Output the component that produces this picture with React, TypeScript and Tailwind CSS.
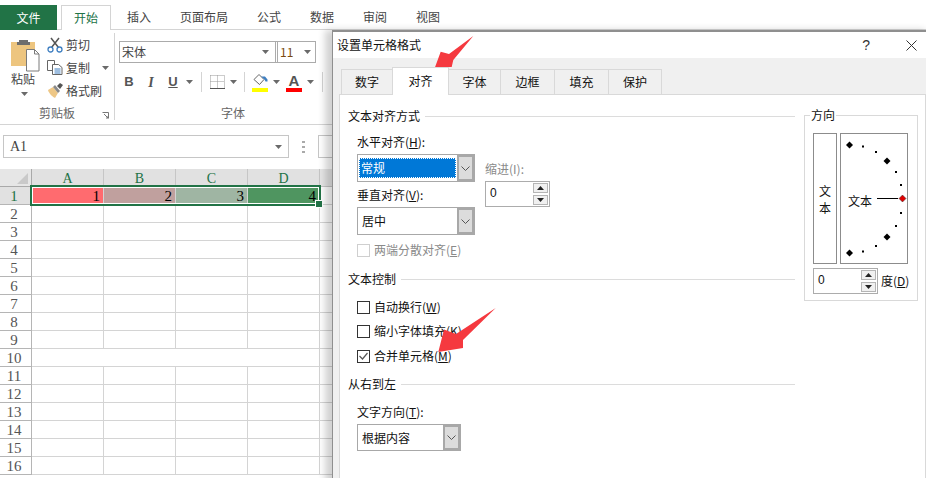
import type { ReactNode } from 'react'

const cjk = "font-['Noto_Sans_CJK_SC','Liberation_Sans',sans-serif]"
const sheetFont = "font-['Liberation_Serif','Noto_Sans_CJK_SC',serif]"

const rows = Array.from({ length: 16 }, (_, i) => i + 1)
const columns = ['A', 'B', 'C', 'D']
const fills = ['bg-[#ff6b6f]', 'bg-[#c0a09e]', 'bg-[#9fb5a3]', 'bg-[#4f9560]']

function Caret({ className = '' }: { className?: string }) {
  return (
    <svg width="7" height="4" viewBox="0 0 7 4" className={className} aria-hidden="true">
      <path d="M0 0h7L3.5 4z" fill="#6a6a6a" />
    </svg>
  )
}

function Divider({ className = '' }: { className?: string }) {
  return <div className={`h-[20px] w-px bg-[#d4d4d4] ${className}`} />
}

/* 功能区左侧：粘贴板 */
function PasteIcon() {
  return (
    <svg width="29" height="33" viewBox="0 0 29 33" aria-hidden="true">
      <path d="M0 3h24v24H0z" fill="#edc57f" />
      <path d="M8 3V1h9v2h2v3H6V3z" fill="#6d6d6d" />
      <path d="M15.500 10.500h8l4.500 4.500v17h-12.500z" fill="#fff" stroke="#7a7a7a" />
      <path d="M23.500 10.500v4.500h4.500" fill="none" stroke="#7a7a7a" />
    </svg>
  )
}

function ScissorsIcon() {
  return (
    <svg width="16" height="16" viewBox="0 0 16 16" aria-hidden="true">
      <path d="M4 1l7.500 9.500M12 1l-7.500 9.500" stroke="#555" strokeWidth="1.500" fill="none" />
      <circle cx="3.500" cy="12.500" r="2.500" fill="none" stroke="#3f7fc1" strokeWidth="1.300" />
      <circle cx="12.500" cy="12.500" r="2.500" fill="none" stroke="#3f7fc1" strokeWidth="1.300" />
    </svg>
  )
}

function CopyIcon() {
  return (
    <svg width="16" height="15" viewBox="0 0 16 15" aria-hidden="true">
      <path d="M.500.500h7v10h-7z" fill="#fff" stroke="#666" />
      <path d="M5.500 4.500h6l3.500 3v7h-9.500z" fill="#fff" stroke="#666" />
      <path d="M7.500 9h6M7.500 11h6M7.500 13h6" stroke="#3f7fc1" />
    </svg>
  )
}

function BrushIcon() {
  return (
    <svg width="17" height="15" viewBox="0 0 17 15" aria-hidden="true">
      <path d="M1 7l5-3 5 6-3 5C6 14 2 11 1 7z" fill="#eec786" />
      <path d="M6 4l5 6 2-2-5-6z" fill="#8a8a8a" />
      <path d="M10 3l3-3 3 2-3 4z" fill="#555" />
    </svg>
  )
}

function BorderIcon() {
  return (
    <svg width="15" height="14" viewBox="0 0 15 14" aria-hidden="true">
      <path d="M.500.500h14M.500 6.500h14M.500.500v13M7.500.500v13M14.500.500v13" stroke="#999" strokeDasharray="1 1" fill="none" />
      <path d="M0 13.500h15" stroke="#555" />
    </svg>
  )
}

function FillIcon() {
  return (
    <svg width="16" height="19" viewBox="0 0 16 19" aria-hidden="true">
      <path d="M2 6.500L7 1.500l5 5-4.500 5z" fill="#fff" stroke="#666" />
      <path d="M9 3.500h4l2.500 3v2h-2l-1-2z" fill="#3f7fc1" />
      <path d="M0 15h16v4H0z" fill="#ffff00" />
    </svg>
  )
}

function ClipboardGroup() {
  return (
    <div className="mt-[3px] flex h-[87px] w-[115px] shrink-0 flex-col justify-between border-r border-[#d4d4d4]">
      <div className="flex">
        <div className="ml-[11px] flex w-[29px] flex-col items-start pt-[6px]">
          <PasteIcon />
          <span className="-mt-[1px] w-6 text-center leading-[16px]">粘贴</span>
          <Caret className="ml-[10px] mt-[5px]" />
        </div>
        <div className="ml-[7px] flex flex-col">
          <div className="flex h-[23px] items-center gap-[3px]">
            <ScissorsIcon />
            <span>剪切</span>
          </div>
          <div className="flex h-[23px] items-center gap-[3px]">
            <CopyIcon />
            <span>复制</span>
            <Caret className="ml-[9px]" />
          </div>
          <div className="flex h-[23px] items-center gap-[2px]">
            <BrushIcon />
            <span>格式刷</span>
          </div>
        </div>
      </div>
      <div className="relative h-[15px] text-center leading-[15px] text-[#666]">
        剪贴板
        <svg width="8" height="8" viewBox="0 0 8 8" className="absolute bottom-0 right-[4px]" aria-hidden="true">
          <path d="M.500.500h6v6M2 2l4 4M4 6h2V4" fill="none" stroke="#777" />
        </svg>
      </div>
    </div>
  )
}

function FontGroup() {
  return (
    <div className="mt-[3px] flex h-[87px] w-[218px] shrink-0 flex-col justify-between pl-[4px]">
      <div className="pt-[8px]">
        <div className="flex h-[22px] w-[197px] border border-[#ababab] leading-[20px]">
          <div className="flex w-[156px] items-center justify-between border-r border-[#ababab] pl-[2px] pr-[6px]">
            <span>宋体</span>
            <Caret />
          </div>
          <div className="ml-px flex flex-1 items-center justify-between border-l border-[#ababab] pl-[2px] pr-[4px]">
            <span className="text-[#7a4a10]">11</span>
            <Caret />
          </div>
        </div>
        <div className="mt-[9px] flex h-[20px] items-center text-[#555]">
          <span className="w-5 text-center font-['Liberation_Sans',sans-serif] text-[13px] font-bold">B</span>
          <span className="ml-[2px] w-5 text-center font-['Liberation_Serif',serif] text-[14px] font-bold italic">I</span>
          <span className="ml-[2px] w-5 text-center font-['Liberation_Sans',sans-serif] text-[13px] font-bold underline">U</span>
          <Caret className="ml-[3px]" />
          <Divider className="ml-[8px]" />
          <div className="ml-[8px]"><BorderIcon /></div>
          <Caret className="ml-[5px]" />
          <Divider className="ml-[7px]" />
          <div className="ml-[7px]"><FillIcon /></div>
          <Caret className="ml-[5px]" />
          <div className="ml-[6px] flex w-4 flex-col items-center">
            <span className="h-[15px] font-['Liberation_Sans',sans-serif] text-[15px] font-bold leading-[15px]">A</span>
            <span className="h-[4px] w-4 bg-[#ff0000]" />
          </div>
          <Caret className="ml-[5px]" />
          <Divider className="ml-[8px]" />
        </div>
      </div>
      <div className="h-[15px] pl-[14px] text-center leading-[15px] text-[#666]">字体</div>
    </div>
  )
}

function Ribbon() {
  return (
    <>
      <div className="flex h-[30px] items-end border-b border-[#d4d4d4]">
        <div className="mt-[5px] flex h-[25px] w-[57px] items-center justify-center self-start bg-[#217346] text-white">文件</div>
        <div className="relative top-px ml-[4px] flex h-[25px] w-[50px] items-center justify-center border-x border-t border-[#d4d4d4] bg-white text-[#217346]">开始</div>
        <div className="ml-[16px] flex h-[25px] items-center gap-[29px] text-[#444]">
          {['插入', '页面布局', '公式', '数据', '审阅', '视图'].map((tab) => (
            <span key={tab}>{tab}</span>
          ))}
        </div>
      </div>
      <div className="flex h-[95px] border-b border-[#d4d4d4] text-[#444]">
        <ClipboardGroup />
        <FontGroup />
      </div>
    </>
  )
}

function FormulaBar() {
  return (
    <div className="ml-[3px] mt-[10px] flex h-[23px] items-center">
      <div className={`flex h-full w-[286px] items-center justify-between border border-[#c6c6c6] pl-[6px] pr-[6px] ${sheetFont} text-[14px] text-[#444]`}>
        A1
        <Caret />
      </div>
      <div className="ml-[13px] flex h-[12px] w-[3px] flex-col justify-between">
        <span className="h-[2px] bg-[#aaa]" />
        <span className="h-[2px] bg-[#aaa]" />
        <span className="h-[2px] bg-[#aaa]" />
      </div>
      <div className="ml-[13px] h-full w-[60px] border border-[#c6c6c6]" />
    </div>
  )
}

function Sheet() {
  return (
    <div className={`relative mt-[11px] ${sheetFont} text-[15px] leading-[19px]`}>
      <div className="flex h-[18px]">
        <div className="relative w-[32px] shrink-0 border-b border-r border-[#a9a9a9] bg-[#e6e6e6]">
          <svg width="11" height="11" viewBox="0 0 11 11" className="absolute bottom-[2px] right-[3px]" aria-hidden="true">
            <path d="M11 0v11H0z" fill="#c9c9c9" />
          </svg>
        </div>
        {columns.map((col) => (
          <div key={col} className="w-[72px] shrink-0 border-b border-r border-[#c6c6c6] bg-[#e1e1e1] text-center text-[14px] text-[#217346]">
            {col}
          </div>
        ))}
        <div className="w-[72px] shrink-0 border-b border-[#c6c6c6] bg-[#e6e6e6]" />
      </div>
      {rows.map((row) => (
        <div key={row} className="flex h-[18px]">
          <div className={`w-[32px] shrink-0 border-b border-r border-[#b5b5b5] pr-[3px] text-center ${row === 1 ? 'bg-[#e1e1e1] text-[#217346]' : 'bg-white text-[#555]'}`}>
            {row}
          </div>
          {row === 10 ? (
            <div className="w-[288px] shrink-0 border-b border-r border-[#d4d4d4]" />
          ) : (
            columns.map((col, i) => (
              <div
                key={col}
                className={`w-[72px] shrink-0 border-b border-r border-[#d4d4d4] pr-[3px] text-right text-black ${row === 1 ? fills[i] : ''}`}
              >
                {row === 1 ? i + 1 : ''}
              </div>
            ))
          )}
          <div className="w-[72px] shrink-0 border-b border-[#d4d4d4]" />
        </div>
      ))}
      {/* 选区框 */}
      <div className="absolute left-[30px] top-[16px] h-[21px] w-[291px] border-2 border-[#217346]">
        <div className="h-full w-full border border-white" />
        <div className="absolute -bottom-[3px] -right-[3px] h-[6px] w-[6px] bg-[#217346] outline outline-1 outline-white" />
      </div>
    </div>
  )
}

function Section({ title, children }: { title: string; children?: ReactNode }) {
  return (
    <>
      <div className="flex h-[18px] items-center gap-[5px]">
        <span className="shrink-0">{title}</span>
        <div className="h-px flex-1 bg-[#dcdcdc]" />
      </div>
      {children}
    </>
  )
}

function Chevron() {
  return (
    <svg width="9" height="5" viewBox="0 0 9 5" aria-hidden="true">
      <path d="M.500.500l4 4 4-4" fill="none" stroke="#555" />
    </svg>
  )
}

function Select({ text, width, height, selected }: { text: string; width: string; height: string; selected?: boolean }) {
  return (
    <div className={`mt-[3px] flex ${width} ${height} border border-[#a8a8a8] bg-white`}>
      <div className="flex min-w-0 flex-1 items-center p-px">
        <div className={`flex h-[20px] w-full items-center ${selected ? 'border border-dotted border-white bg-[#0078d7] pl-px text-white' : 'pl-[3px]'}`}>
          {text}
        </div>
      </div>
      <div className="flex w-[17px] shrink-0 items-center justify-center border-2 border-[#a8a8a8] bg-[#dcdcdc]">
        <Chevron />
      </div>
    </div>
  )
}

function Spin({ className = '' }: { className?: string }) {
  return (
    <div className={`flex h-[26px] w-[65px] items-center justify-between border border-[#acacac] bg-white pl-[4px] pr-px ${className}`}>
      <span className="-mt-[2px] font-['Liberation_Sans',sans-serif] text-[12px]">0</span>
      <div className="flex flex-col gap-[2px]">
        {['M0 4h7L3.500 0z', 'M0 0h7L3.500 4z'].map((d) => (
          <div key={d} className="flex h-[10px] w-[15px] items-center justify-center border border-[#b5b5b5] bg-[#f0f0f0]">
            <svg width="7" height="4" viewBox="0 0 7 4" aria-hidden="true">
              <path d={d} fill="#222" />
            </svg>
          </div>
        ))}
      </div>
    </div>
  )
}

function CheckRow({ label, mark, checked, disabled, className = '' }: { label: string; mark: string; checked?: boolean; disabled?: boolean; className?: string }) {
  return (
    <div className={`flex h-[18px] items-center gap-[4px] ${disabled ? 'text-[#8a8a8a]' : ''} ${className}`}>
      <div className={`flex h-[13px] w-[13px] items-center justify-center border bg-white ${disabled ? 'border-[#cfcfcf]' : 'border-[#333]'}`}>
        {checked && (
          <svg width="9" height="8" viewBox="0 0 9 8" aria-hidden="true">
            <path d="M.500 4l3 3L8.500 1" fill="none" stroke="#555" strokeWidth="1.200" />
          </svg>
        )}
      </div>
      <span>
        {label}(<u>{mark}</u>)
      </span>
    </div>
  )
}

/* 方向拨盘 */
function Dial() {
  const dots = [[22, 12.500], [35, 18], [55, 38], [60, 51], [60, 79], [55, 92], [35, 112], [22, 117.500]]
  const diamonds = [[8.500, 11], [46, 27], [46, 103], [8.500, 119]]
  const diamond = (x: number, y: number, r: number) => `M${x} ${y - r}L${x + r} ${y}L${x} ${y + r}L${x - r} ${y}z`
  return (
    <div className="relative ml-[3px] h-[131px] w-[68px] border border-[#8c8c8c]">
      <svg width="66" height="129" viewBox="0 0 66 129" className="absolute left-0 top-0" aria-hidden="true">
        {dots.map(([x, y]) => (
          <rect key={`${x}-${y}`} x={x - 1} y={y - 1} width="2" height="2" fill="#000" />
        ))}
        {diamonds.map(([x, y]) => (
          <path key={`${x}-${y}`} d={diamond(x, y, 3.500)} fill="#000" />
        ))}
        <path d="M36 64.500h21" stroke="#000" />
        <path d={diamond(61.500, 64.500, 3.500)} fill="#e00000" stroke="#333" strokeWidth="0.500" />
      </svg>
      <span className="absolute left-[7px] top-[59px] leading-[16px]">文本</span>
    </div>
  )
}

function Dialog() {
  return (
    <div className={`absolute left-[332px] top-[30px] h-[460px] w-[600px] border-l border-t-2 border-[#8f8f8f] bg-white text-[12px] text-[#111] shadow-[-7px_0_7px_rgba(0,0,0,0.18)] ${cjk}`}>
      <div className="flex h-[26px] items-center pl-[4px]">
        <span className="flex-1">设置单元格格式</span>
        <span className="font-['Liberation_Sans',sans-serif] text-[14px] text-[#333]">?</span>
        <svg width="11" height="11" viewBox="0 0 11 11" className="ml-[36px] mr-[15px]" aria-hidden="true">
          <path d="M.500.500l10 10M10.500.500l-10 10" stroke="#333" />
        </svg>
      </div>
      <div className="h-full bg-[#f0f0f0] pl-[6px] pt-[9px]">
        <div className="relative z-10 -mb-px flex h-[28px] items-end pl-[2px]">
          <div className="flex h-[26px] w-[51px] items-center justify-center border border-b-0 border-r-0 border-[#d9d9d9] pb-px">数字</div>
          <div className="flex h-[28px] w-[57px] items-center justify-center border border-b-0 border-[#d9d9d9] bg-white pb-px">对齐</div>
          {['字体', '边框', '填充', '保护'].map((tab, i) => (
            <div key={tab} className={`flex h-[26px] items-center justify-center border border-b-0 border-l-0 border-[#d9d9d9] pb-px ${i === 0 ? 'w-[52px]' : i === 3 ? 'w-[53px]' : 'w-[54px]'}`}>
              {tab}
            </div>
          ))}
        </div>
        <div className="flex h-[400px] w-[587px] border border-[#d9d9d9] bg-white pl-[8px] pt-[12px]">
          <div className="w-[447px] shrink-0">
            <Section title="文本对齐方式" />
            <div className="ml-[9px] mt-[8px] flex">
              <div className="w-[118px]">
                <div className="h-[18px] leading-[18px]">水平对齐(<u>H</u>):</div>
                <Select text="常规" width="w-[118px]" height="h-[28px]" selected />
                <div className="mt-[4px] h-[18px] leading-[18px]">垂直对齐(<u>V</u>):</div>
                <Select text="居中" width="w-[118px]" height="h-[28px]" />
              </div>
              <div className="ml-[10px] pt-[27px]">
                <div className="h-[18px] leading-[18px] text-[#8a8a8a]">缩进(I):</div>
                <Spin className="mt-[3px]" />
              </div>
            </div>
            <div className="ml-[9px] mt-[6px]">
              <CheckRow label="两端分散对齐" mark="E" disabled />
            </div>
            <div className="mt-[11px]">
              <Section title="文本控制" />
            </div>
            <div className="ml-[9px] mt-[10px]">
              <CheckRow label="自动换行" mark="W" />
              <CheckRow label="缩小字体填充" mark="K" className="mt-[6px]" />
              <CheckRow label="合并单元格" mark="M" checked className="mt-[7px]" />
            </div>
            <div className="mt-[10px]">
              <Section title="从右到左" />
            </div>
            <div className="ml-[9px] mt-[10px]">
              <div className="h-[18px] leading-[18px]">文字方向(<u>T</u>):</div>
              <Select text="根据内容" width="w-[104px]" height="h-[27px]" />
            </div>
          </div>
          <div className="relative ml-[9px] mt-[8px] h-[186px] w-[114px] border border-[#d9d9d9] pl-[8px] pt-[17px]">
            <span className="absolute -top-[9px] left-[5px] bg-white px-px leading-[16px]">方向</span>
            <div className="flex">
              <div className="flex h-[131px] w-[24px] flex-col items-center justify-center border border-[#8c8c8c] leading-[17px]">
                <span>文</span>
                <span>本</span>
              </div>
              <Dial />
            </div>
            <div className="mt-[4px] flex items-center gap-[3px]">
              <Spin />
              <span>度(<u>D</u>)</span>
            </div>
          </div>
        </div>
      </div>
    </div>
  )
}

/* 红色标注箭头 */
function Arrows() {
  return (
    <svg width="926" height="478" viewBox="0 0 926 478" className="pointer-events-none absolute left-0 top-0" aria-hidden="true">
      <path d="M435 67.300L440.700 51.700L449 54L473.300 36L453.300 60L451.700 67z" fill="#f5393f" />
      <path d="M438.300 352L444 329.500L456 334L495.700 308L463 340L463 348z" fill="#f5393f" />
    </svg>
  )
}

export default function App() {
  return (
    <div className={`relative h-[478px] w-[926px] overflow-hidden bg-white text-[12px] ${cjk}`}>
      <Ribbon />
      <FormulaBar />
      <Sheet />
      <Dialog />
      <Arrows />
    </div>
  )
}
